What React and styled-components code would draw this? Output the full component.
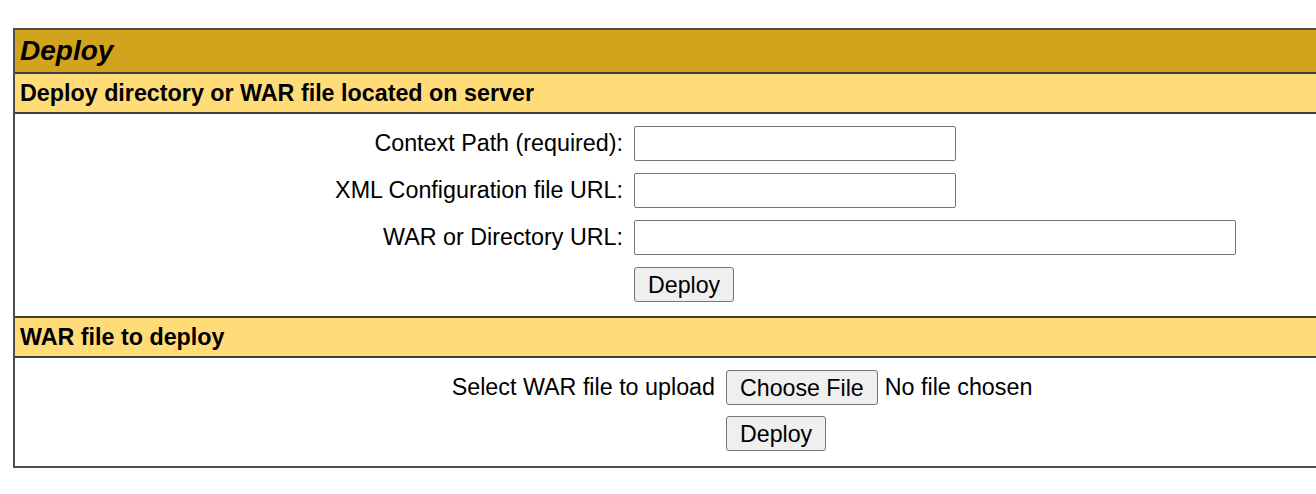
import styled, { createGlobalStyle } from "styled-components";

const GlobalStyle = createGlobalStyle`
	html, body {
		margin: 0;
		padding: 0;
		background: #ffffff;
		overflow: hidden;
	}
	body {
		font-family: "Liberation Sans", Arial, sans-serif;
		color: #000000;
	}
`;

const App = () => {
	return (
		<Page>
			<GlobalStyle />
			<Panel>
				<TitleBar>Deploy</TitleBar>

				{/* deploy from server path */}
				<SubHeader>Deploy directory or WAR file located on server</SubHeader>
				<FormBody labelWidth={608} bodyHeight={204}>
					<Label>Context Path (required):</Label>
					<TextInput type='text' fieldWidth={322} />

					<Label>XML Configuration file URL:</Label>
					<TextInput type='text' fieldWidth={322} />

					<Label>WAR or Directory URL:</Label>
					<TextInput type='text' fieldWidth={602} />

					<span />
					<Button>Deploy</Button>
				</FormBody>

				{/* upload war */}
				<SubHeader>WAR file to deploy</SubHeader>
				<FormBody labelWidth={700} bodyHeight={110} rowGap={11}>
					<Label>Select WAR file to upload</Label>
					<FilePicker>
						<Button>Choose File</Button>
						<FileName>No file chosen</FileName>
					</FilePicker>

					<span />
					<Button>Deploy</Button>
				</FormBody>
			</Panel>
		</Page>
	);
};

const Page = styled.div`
	padding: 28px 0 0 13px;
	width: 1400px;
`;

const Panel = styled.div`
	width: 1340px;
	border: 2px solid #4d4d4d;
	border-right: none;
	display: flex;
	flex-direction: column;

	& > * + * {
		border-top: 2px solid #3f3f3f;
	}
`;

const TitleBar = styled.div`
	height: 42px;
	background: #d2a41e;
	padding: 0 5px;
	display: flex;
	align-items: center;
	font-size: 28px;
	font-weight: bold;
	font-style: italic;
`;

const SubHeader = styled.div`
	height: 38px;
	background: #ffdc78;
	padding: 0 5px;
	display: flex;
	align-items: center;
	font-size: 23.3px;
	font-weight: bold;
`;

const FormBody = styled.div`
	height: ${(p) => p.bodyHeight}px;
	box-sizing: border-box;
	padding: 12px 0;
	display: grid;
	grid-template-columns: ${(p) => p.labelWidth}px 1fr;
	grid-auto-rows: min-content;
	column-gap: 11px;
	row-gap: ${(p) => p.rowGap ?? 12}px;
	align-items: center;
`;

const Label = styled.label`
	justify-self: end;
	font-size: 23.3px;
	white-space: nowrap;
`;

const TextInput = styled.input`
	width: ${(p) => p.fieldWidth}px;
	height: 35px;
	box-sizing: border-box;
	border: 1px solid #767676;
	border-radius: 2px;
	background: #ffffff;
	margin: 0;
	padding: 0 4px;
	font-family: inherit;
	font-size: 23.2px;
`;

const Button = styled.button`
	justify-self: start;
	height: ${(p) => p.tall ? 36 : 35}px;
	box-sizing: border-box;
	padding: 2px 13px 0;
	margin: 0;
	background: #efefef;
	border: 1px solid #767676;
	border-radius: 3px;
	font-family: "Liberation Sans", Arial, sans-serif;
	font-size: 23.2px;
	color: #000000;
	line-height: 1;
`;

const FilePicker = styled.div`
	display: flex;
	align-items: center;
	gap: 7px;
`;

const FileName = styled.span`
	font-size: 23.3px;
`;

export default App;
